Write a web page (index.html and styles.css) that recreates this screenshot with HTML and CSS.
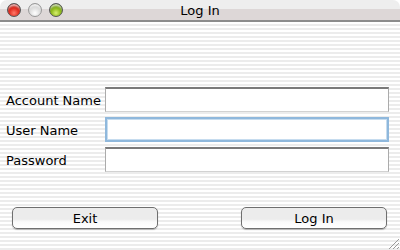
FILE: index.html
```html
<!DOCTYPE html>
<html lang="en">
<head>
  <meta charset="UTF-8" />
  <title>Log In</title>
  <link rel="stylesheet" href="styles.css">
</head>
<body>

<div class="window">
  <div class="titlebar">
    <div class="lights">
      <span class="light close"></span>
      <span class="light mini"></span>
      <span class="light zoom"></span>
    </div>
    <div class="title">Log In</div>
  </div>

  <div class="content">
    <div class="form">
      <div class="row">
        <label for="account">Account Name</label>
        <input id="account" type="text">
      </div>
      <div class="row">
        <label for="user">User Name</label>
        <input id="user" class="focused" type="text">
      </div>
      <div class="row">
        <label for="pass">Password</label>
        <input id="pass" type="password">
      </div>
    </div>

    <div class="actions">
      <button>Exit</button>
      <button>Log In</button>
    </div>

    <svg class="grip" width="11" height="11" viewBox="0 0 11 11">
      <path d="M1 11 L11 1 M5 11 L11 5 M9 11 L11 9" stroke="#9a9a9a" stroke-width="1" fill="none"/>
    </svg>
  </div>
</div>

</body>
</html>
```

FILE: styles.css
```css
* {
  box-sizing: border-box;
}

body {
  margin: 0;
  background: #fff;
  font-family: 'DejaVu Sans', 'Liberation Sans', sans-serif;
  font-size: 13px;
  color: #000;
}

.window {
  width: 400px;
  height: 250px;
  display: flex;
  flex-direction: column;
}

.titlebar {
  height: 22px;
  position: relative;
  border-radius: 7px 7px 0 0;
  background: linear-gradient(to bottom, #eeeeee 0, #eeeeee 9px, #ddd7d7 9px, #ddd7d7 100%);
  border-bottom: 2px solid #8c8c8c;
  display: flex;
  align-items: center;
  justify-content: center;
}

.lights {
  position: absolute;
  left: 7px;
  top: 3px;
  display: flex;
  gap: 7px;
}

.light {
  width: 14px;
  height: 14px;
  border-radius: 50%;
  border: 1px solid #555;
}

.close {
  background: radial-gradient(circle at 50% 75%, #ff7a6a 0, #e02a1e 45%, #8a0c06 100%);
  box-shadow: inset 0 3px 2px -1px rgba(255, 255, 255, 0.7);
}

.mini {
  border-color: #999;
  background: radial-gradient(circle at 50% 75%, #ffffff 0, #dcdcdc 50%, #a8a8a8 100%);
  box-shadow: inset 0 3px 2px -1px rgba(255, 255, 255, 0.8);
}

.zoom {
  background: radial-gradient(circle at 50% 75%, #d8ef70 0, #8cb818 45%, #3f6008 100%);
  box-shadow: inset 0 3px 2px -1px rgba(255, 255, 255, 0.7);
}

.title {
  font-size: 13px;
  margin-top: 1px;
}

.content {
  flex: 1;
  position: relative;
  background: repeating-linear-gradient(to bottom, #ffffff 0, #ffffff 2px, #ececec 2px, #ececec 4px);
  padding: 65px 11px 0 6px;
}

.form {
  display: flex;
  flex-direction: column;
  gap: 5px;
}

.row {
  display: flex;
  align-items: center;
}

.row label {
  width: 99px;
  padding-top: 2px;
}

.row input {
  width: 284px;
  height: 25px;
  border: 1px solid #ababab;
  border-top: 2px solid #7a7a7a;
  border-bottom-color: #d2d2d2;
  background: #fff;
  outline: none;
  font: inherit;
}

.row input.focused {
  border: 2px solid #8fb8dc;
  box-shadow: inset 0 0 0 1px #c6dcef;
}

.actions {
  display: flex;
  justify-content: space-between;
  margin-top: 35px;
  padding-left: 6px;
  padding-right: 2px;
}

button {
  width: 146px;
  height: 22px;
  font: inherit;
  font-size: 13px;
  color: #000;
  border: 1px solid #6f6f6f;
  border-radius: 5px;
  background: linear-gradient(to bottom, #ececec 0, #ececec 55%, #fafafa 70%, #ffffff 100%);
  box-shadow: 0 1px 1px rgba(0, 0, 0, 0.25);
  padding: 0;
}

.grip {
  position: absolute;
  right: 1px;
  bottom: 1px;
}
```
